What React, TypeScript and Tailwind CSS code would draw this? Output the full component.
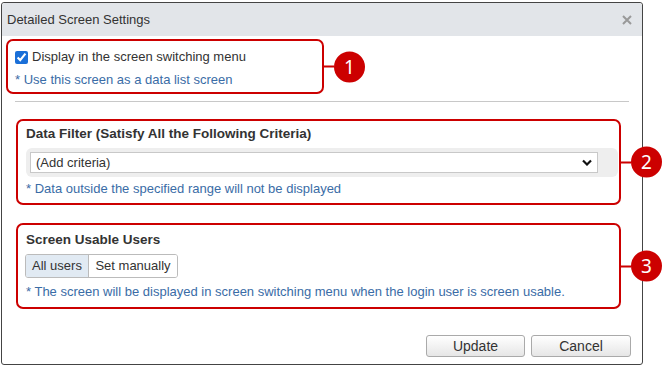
import React from "react";

const Badge: React.FC<{ n: number; line: number }> = ({ n, line }) => (
  <div className="absolute left-full top-1/2 -translate-y-1/2 flex items-center">
    <div className="h-[2px] bg-[#cc0000]" style={{ width: line }} />
    <div className="w-[31px] h-[31px] rounded-full bg-[#cc0000] text-white flex items-center justify-center text-[19px] font-['Noto_Sans',sans-serif] leading-none">
      {n}
    </div>
  </div>
);

const Note: React.FC<{ children: React.ReactNode }> = ({ children }) => (
  <div className="text-[13px] leading-[16px] text-[#3a6ca6]">{children}</div>
);

export default function App() {
  return (
    <div className="w-[670px] h-[367px] bg-white font-['Liberation_Sans',Arial,sans-serif] text-[#333] pt-[2px] pl-[1px]">
      <div className="w-[642px] h-[363px] border border-[#444] rounded-[3px] flex flex-col">
        {/* header */}
        <div className="h-[33px] bg-[#e2e5e9] flex items-center justify-between pl-[5px] pr-[10px] rounded-t-[3px]">
          <span className="text-[13px] pt-px">Detailed Screen Settings</span>
          <svg width="10" height="10" viewBox="0 0 10 10">
            <path d="M1 1L9 9M9 1L1 9" stroke="#999" strokeWidth="2" />
          </svg>
        </div>

        {/* section 1 */}
        <div className="relative mt-[3px] ml-[4px] w-[318px] h-[55px] border-2 border-[#cc0000] rounded-[7px] pl-[7px] pt-[8px]">
          <label className="flex items-center gap-[4px] text-[13px] leading-[16px]">
            <input type="checkbox" defaultChecked className="w-[13px] h-[13px] m-0 accent-[#1a6fd8]" />
            Display in the screen switching menu
          </label>
          <div className="mt-[7px]">
            <Note>* Use this screen as a data list screen</Note>
          </div>
          <Badge n={1} line={12} />
        </div>

        <div className="mt-[7px] ml-[13px] w-[614px] h-px bg-[#c8c8c8]" />

        {/* section 2 */}
        <div className="relative mt-[17px] ml-[14px] w-[605px] h-[86px] border-2 border-[#cc0000] rounded-[7px] pl-[8px] pr-px pt-[5px]">
          <div className="text-[13.5px] leading-[16px] font-bold">Data Filter (Satisfy All the Following Criteria)</div>
          <div className="mt-[6px] h-[29px] bg-[#eeeeee] rounded-[6px] pl-[4px] pr-[20px] flex items-center">
            <div className="w-full h-[21px] bg-white border border-[#c8c8c8] flex items-center justify-between pl-[5px] pr-[5px]">
              <span className="text-[13px]">(Add criteria)</span>
              <svg width="10" height="7" viewBox="0 0 10 7">
                <path d="M1 1.5L5 5.5L9 1.5" stroke="#111" strokeWidth="2.2" fill="none" />
              </svg>
            </div>
          </div>
          <div className="mt-[4px]">
            <Note>* Data outside the specified range will not be displayed</Note>
          </div>
          <Badge n={2} line={12} />
        </div>

        {/* section 3 */}
        <div className="relative mt-[18px] ml-[14px] w-[605px] h-[86px] border-2 border-[#cc0000] rounded-[7px] pl-[7px] pt-[7px]">
          <div className="text-[13.5px] leading-[16px] font-bold pl-px">Screen Usable Users</div>
          <div className="mt-[6px] flex w-fit h-[24px] border border-[#bbb] rounded-[3px] overflow-hidden text-[13px]">
            <div className="w-[63px] bg-[#e1eaf3] flex items-center justify-center border-r border-[#bbb]">All users</div>
            <div className="w-[88px] bg-white flex items-center justify-center">Set manually</div>
          </div>
          <div className="mt-[6px] pl-px">
            <Note>* The screen will be displayed in screen switching menu when the login user is screen usable.</Note>
          </div>
          <Badge n={3} line={12} />
        </div>

        {/* footer */}
        <div className="mt-[26px] flex justify-end gap-[6px] pr-[11px]">
          <button className="w-[99px] h-[22px] border border-[#aaa] rounded-[3px] bg-gradient-to-b from-white to-[#e6e6e6] text-[14px] text-[#333]">
            Update
          </button>
          <button className="w-[100px] h-[22px] border border-[#aaa] rounded-[3px] bg-gradient-to-b from-white to-[#e6e6e6] text-[14px] text-[#333]">
            Cancel
          </button>
        </div>
      </div>
    </div>
  );
}
